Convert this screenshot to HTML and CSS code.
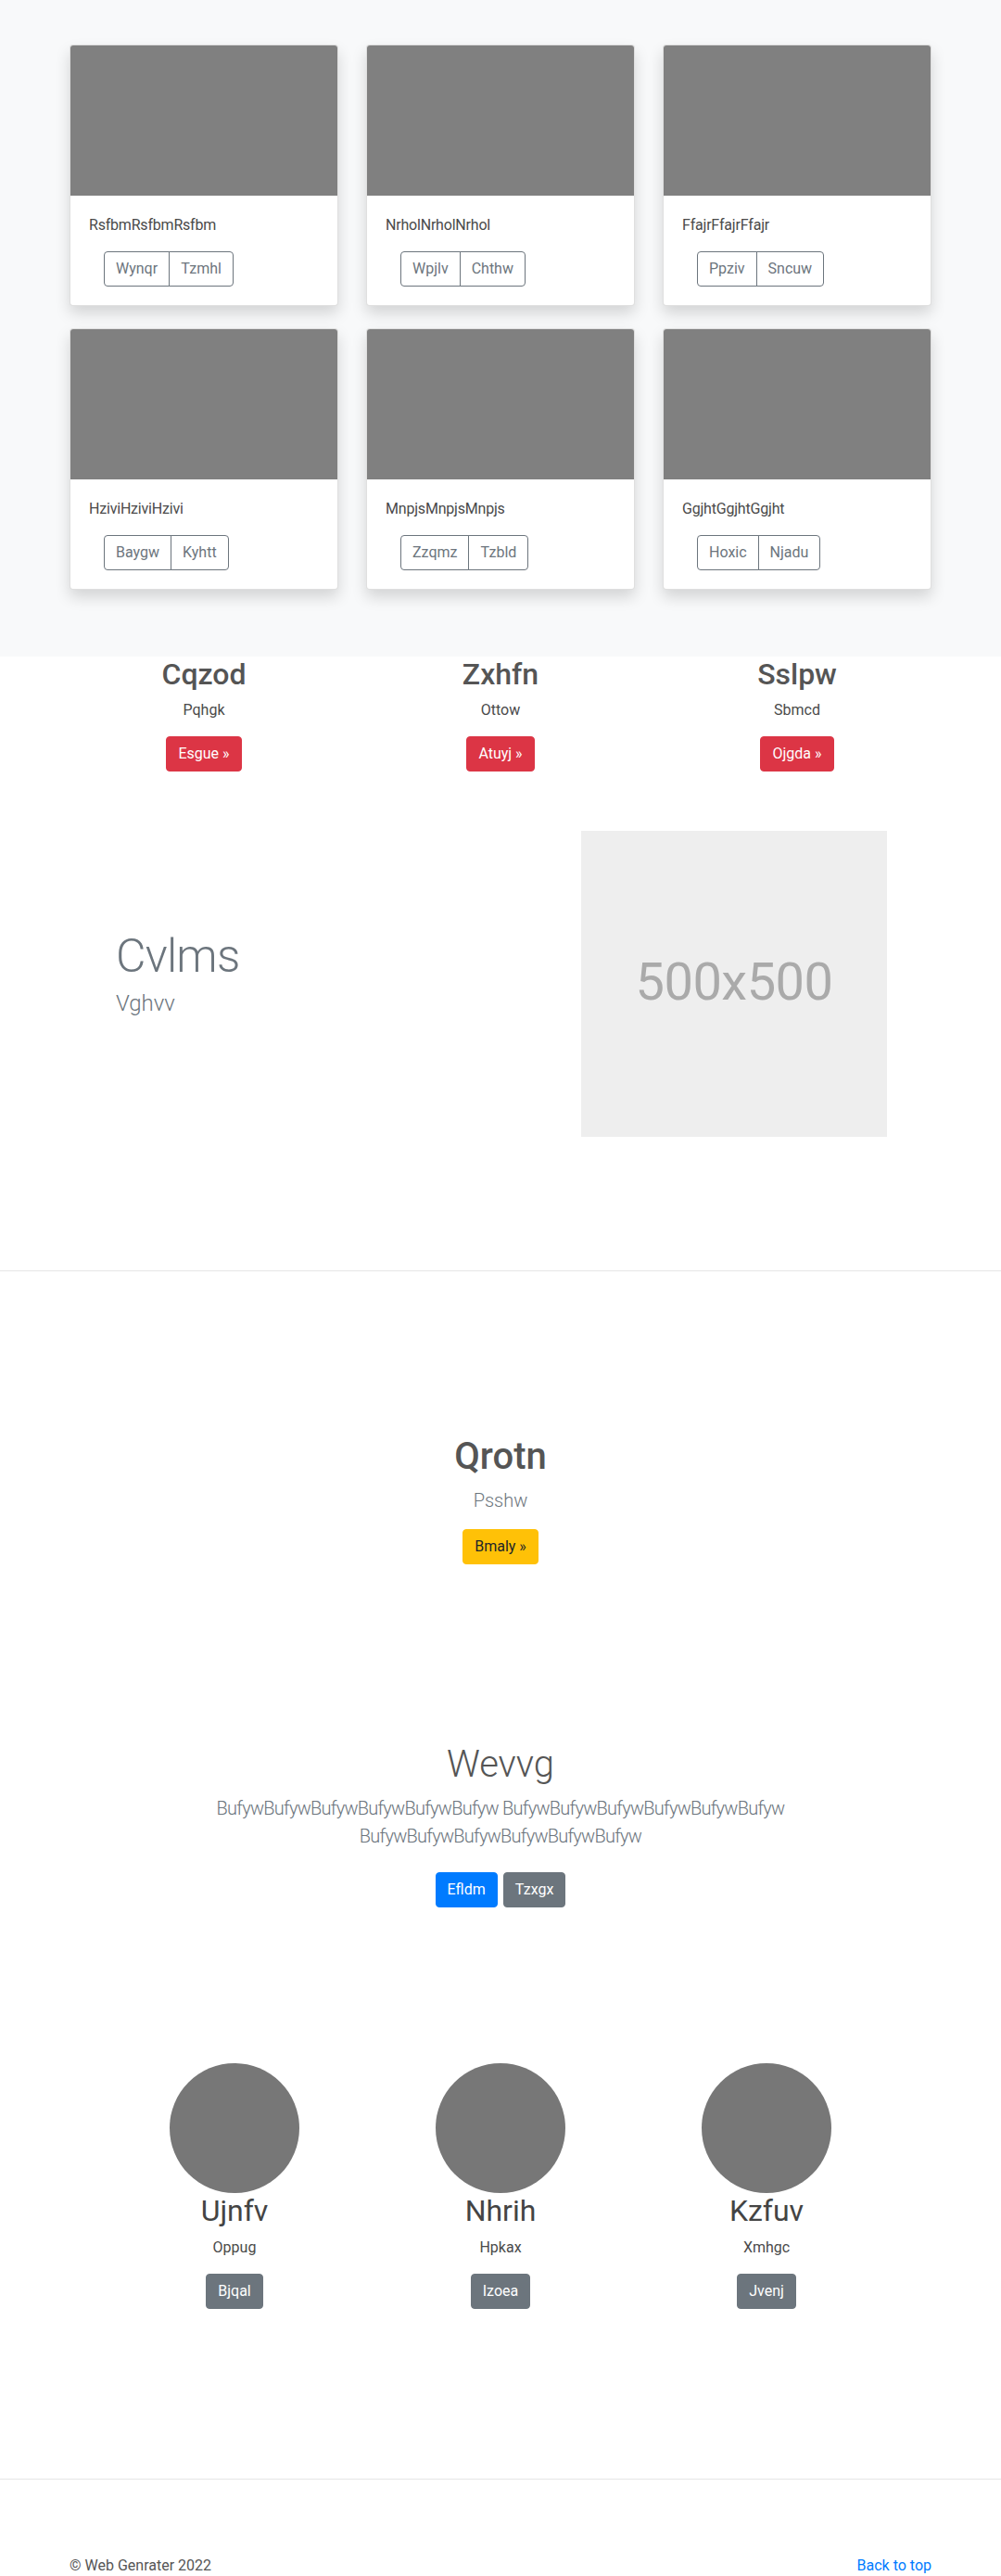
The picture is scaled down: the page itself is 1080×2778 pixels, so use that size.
FILE: index.html
```html
<!DOCTYPE html>
<html lang="en">
<head>
<meta charset="utf-8">
<title>Web Genrater</title>
<link rel="stylesheet" href="styles.css">
</head>
<body>
<main>
  <section class="album">
    <div class="album-grid">
      <div class="card">
        <div class="card-img"></div>
        <div class="card-body">
          <p class="card-text">RsfbmRsfbmRsfbm</p>
          <div class="btn-group"><button class="btn-outline">Wynqr</button><button class="btn-outline">Tzmhl</button></div>
        </div>
      </div>
      <div class="card">
        <div class="card-img"></div>
        <div class="card-body">
          <p class="card-text">NrholNrholNrhol</p>
          <div class="btn-group"><button class="btn-outline">Wpjlv</button><button class="btn-outline">Chthw</button></div>
        </div>
      </div>
      <div class="card">
        <div class="card-img"></div>
        <div class="card-body">
          <p class="card-text">FfajrFfajrFfajr</p>
          <div class="btn-group"><button class="btn-outline">Ppziv</button><button class="btn-outline">Sncuw</button></div>
        </div>
      </div>
      <div class="card">
        <div class="card-img"></div>
        <div class="card-body">
          <p class="card-text">HziviHziviHzivi</p>
          <div class="btn-group"><button class="btn-outline">Baygw</button><button class="btn-outline">Kyhtt</button></div>
        </div>
      </div>
      <div class="card">
        <div class="card-img"></div>
        <div class="card-body">
          <p class="card-text">MnpjsMnpjsMnpjs</p>
          <div class="btn-group"><button class="btn-outline">Zzqmz</button><button class="btn-outline">Tzbld</button></div>
        </div>
      </div>
      <div class="card">
        <div class="card-img"></div>
        <div class="card-body">
          <p class="card-text">GgjhtGgjhtGgjht</p>
          <div class="btn-group"><button class="btn-outline">Hoxic</button><button class="btn-outline">Njadu</button></div>
        </div>
      </div>
    </div>
  </section>

  <section class="marketing">
    <div class="mk-col">
      <h2 class="mk-title">Cqzod</h2>
      <p class="mk-text">Pqhgk</p>
      <a class="btn btn-danger" href="#">Esgue &raquo;</a>
    </div>
    <div class="mk-col">
      <h2 class="mk-title">Zxhfn</h2>
      <p class="mk-text">Ottow</p>
      <a class="btn btn-danger" href="#">Atuyj &raquo;</a>
    </div>
    <div class="mk-col">
      <h2 class="mk-title">Sslpw</h2>
      <p class="mk-text">Sbmcd</p>
      <a class="btn btn-danger" href="#">Ojgda &raquo;</a>
    </div>
  </section>

  <section class="featurette">
    <div class="feat-text">
      <h2 class="feat-heading">Cvlms</h2>
      <p class="feat-sub">Vghvv</p>
    </div>
    <div class="feat-img"><span class="feat-img-label">500x500</span></div>
  </section>

  <hr class="divider">

  <section class="cta">
    <h1 class="cta-title">Qrotn</h1>
    <p class="lead">Psshw</p>
    <a class="btn btn-warning" href="#">Bmaly &raquo;</a>
  </section>

  <section class="jumbo">
    <h1 class="jumbo-title">Wevvg</h1>
    <p class="lead jumbo-lead">BufywBufywBufywBufywBufywBufyw BufywBufywBufywBufywBufywBufyw BufywBufywBufywBufywBufywBufyw</p>
    <p class="jumbo-actions">
      <a class="btn btn-primary" href="#">Efldm</a>
      <a class="btn btn-secondary" href="#">Tzxgx</a>
    </p>
  </section>

  <section class="team">
    <div class="team-col">
      <div class="avatar"></div>
      <h2 class="team-name">Ujnfv</h2>
      <p class="team-role">Oppug</p>
      <a class="btn btn-secondary" href="#">Bjqal</a>
    </div>
    <div class="team-col">
      <div class="avatar"></div>
      <h2 class="team-name">Nhrih</h2>
      <p class="team-role">Hpkax</p>
      <a class="btn btn-secondary" href="#">Izoea</a>
    </div>
    <div class="team-col">
      <div class="avatar"></div>
      <h2 class="team-name">Kzfuv</h2>
      <p class="team-role">Xmhgc</p>
      <a class="btn btn-secondary" href="#">Jvenj</a>
    </div>
  </section>

  <hr class="divider footer-divider">

  <footer class="footer">
    <p class="footer-copy">&copy; Web Genrater 2022</p>
    <a class="footer-link" href="#">Back to top</a>
  </footer>
</main>
</body>
</html>
```

FILE: styles.css
```css
* { box-sizing: border-box; }

html, body {
  margin: 0;
  padding: 0;
}

body {
  font-family: Roboto, "Liberation Sans", Arial, sans-serif;
  font-size: 16px;
  line-height: 1.5;
  color: #4a4a4a;
  background: #fff;
  min-height: 2778px;
}

h1, h2, p { margin: 0; }

/* ---------- buttons ---------- */
.btn {
  display: inline-block;
  padding: 6px 12px;
  font-size: 16px;
  line-height: 24px;
  border: 1px solid transparent;
  border-radius: 4px;
  text-decoration: none;
  vertical-align: middle;
}
.btn-danger { background: #dc3545; border-color: #dc3545; color: #fff; }
.btn-warning { background: #ffc107; border-color: #ffc107; color: #212529; }
.btn-primary { background: #007bff; border-color: #007bff; color: #fff; }
.btn-secondary { background: #6c757d; border-color: #6c757d; color: #fff; }

/* ---------- album ---------- */
.album {
  background: #f8f9fa;
  padding: 48px 0 72px;
}
.album-grid {
  width: 930px;
  margin: 0 auto;
  display: grid;
  grid-template-columns: repeat(3, 290px);
  column-gap: 30px;
  row-gap: 24px;
}
.card {
  background: #fff;
  border: 1px solid rgba(0, 0, 0, .125);
  border-radius: 4px;
  overflow: hidden;
  box-shadow: 0 8px 16px rgba(0, 0, 0, .15);
}
.card-img {
  height: 162px;
  background: #808080;
}
.card-body {
  padding: 20px;
}
.card-text {
  line-height: 24px;
  margin-bottom: 16px;
  letter-spacing: -0.2px;
}
.btn-group {
  display: inline-flex;
  margin-left: 16px;
}
.btn-outline {
  font-family: inherit;
  font-size: 16px;
  line-height: 24px;
  padding: 6px 12px;
  background: transparent;
  color: #6c757d;
  border: 1px solid #6c757d;
  border-radius: 0;
  cursor: pointer;
}
.btn-outline:first-child { border-radius: 4px 0 0 4px; }
.btn-outline + .btn-outline { margin-left: -1px; border-radius: 0 4px 4px 0; }

/* ---------- marketing ---------- */
.marketing {
  width: 960px;
  margin: 0 auto;
  display: grid;
  grid-template-columns: repeat(3, 1fr);
  text-align: center;
}
.mk-title {
  font-size: 32px;
  line-height: 1.2;
  font-weight: 500;
  color: #555;
  margin-bottom: 8px;
}
.mk-text {
  margin-bottom: 16px;
}

/* ---------- featurette ---------- */
.featurette {
  width: 960px;
  margin: 64px auto 0;
  display: grid;
  grid-template-columns: 567px 330px;
  align-items: center;
}
.feat-text {
  padding-left: 65px;
}
.feat-heading {
  font-size: 50px;
  line-height: 1;
  font-weight: 300;
  letter-spacing: -0.8px;
  color: #6c757d;
  margin-bottom: 8px;
}
.feat-sub {
  font-size: 24px;
  line-height: 1.5;
  font-weight: 300;
  color: #6c757d;
  margin-bottom: 16px;
}
.feat-img {
  width: 330px;
  height: 330px;
  background: #eee;
  display: flex;
  align-items: center;
  justify-content: center;
}
.feat-img-label {
  font-size: 56px;
  line-height: 1;
  color: #aaa;
  letter-spacing: -0.5px;
  transform: translateY(-2px);
}

/* ---------- dividers ---------- */
.divider {
  margin: 144px 0 0;
  border: 0;
  border-top: 1px solid #e5e5e5;
  height: 0;
}
.footer-divider {
  margin-top: 183px;
}

/* ---------- cta ---------- */
.cta {
  padding-top: 176px;
  text-align: center;
}
.cta-title {
  font-size: 40px;
  line-height: 1.2;
  font-weight: 500;
  color: #555;
  margin-bottom: 8px;
}
.lead {
  font-size: 20px;
  line-height: 1.5;
  font-weight: 300;
  color: #6c757d;
  margin-bottom: 16px;
}

/* ---------- jumbo ---------- */
.jumbo {
  margin-top: 192px;
  text-align: center;
}
.jumbo-title {
  font-size: 40px;
  line-height: 1.2;
  font-weight: 300;
  color: #555;
  margin-bottom: 8px;
}
.jumbo-lead {
  max-width: 700px;
  margin-left: auto;
  margin-right: auto;
  letter-spacing: -0.75px;
}
.jumbo-actions {
  display: flex;
  justify-content: center;
  gap: 6px;
}
.jumbo-actions .btn {
  margin: 8px 0;
}

/* ---------- team ---------- */
.team {
  width: 861px;
  margin: 160px auto 0;
  display: grid;
  grid-template-columns: repeat(3, 1fr);
  text-align: center;
}
.avatar {
  width: 140px;
  height: 140px;
  border-radius: 50%;
  background: #777;
  margin: 0 auto;
}
.team-name {
  font-size: 32px;
  line-height: 1.2;
  font-weight: 400;
  color: #444;
  margin-bottom: 8px;
}
.team-role {
  margin-bottom: 16px;
}

/* ---------- footer ---------- */
.footer {
  width: 930px;
  margin: 0 auto;
  padding: 81px 0 48px;
  display: flex;
  justify-content: space-between;
  align-items: center;
}
.footer-copy {
  color: #555;
}
.footer-link {
  color: #007bff;
  text-decoration: none;
}
```
